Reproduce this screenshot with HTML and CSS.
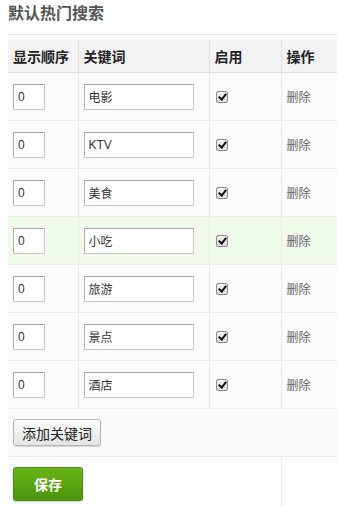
FILE: index.html
```html
<!DOCTYPE html>
<html lang="zh-CN">
<head>
    <meta charset="UTF-8">
    <title>默认热门搜索</title>
    <link rel="stylesheet" href="styles.css">
</head>
<body>
    <h2 class="title">默认热门搜索</h2>
    <table class="hot-table">
        <colgroup>
            <col class="c-order">
            <col class="c-word">
            <col class="c-on">
            <col class="c-op">
        </colgroup>
        <thead>
            <tr>
                <th>显示顺序</th>
                <th>关键词</th>
                <th>启用</th>
                <th>操作</th>
            </tr>
        </thead>
        <tbody>
            <tr>
                <td><input class="ipt ipt-order" type="text" value="0"></td>
                <td><input class="ipt ipt-word" type="text" value="电影"></td>
                <td><input class="chk" type="checkbox" checked></td>
                <td><a class="del" href="#">删除</a></td>
            </tr>
            <tr>
                <td><input class="ipt ipt-order" type="text" value="0"></td>
                <td><input class="ipt ipt-word" type="text" value="KTV"></td>
                <td><input class="chk" type="checkbox" checked></td>
                <td><a class="del" href="#">删除</a></td>
            </tr>
            <tr>
                <td><input class="ipt ipt-order" type="text" value="0"></td>
                <td><input class="ipt ipt-word" type="text" value="美食"></td>
                <td><input class="chk" type="checkbox" checked></td>
                <td><a class="del" href="#">删除</a></td>
            </tr>
            <tr class="hover">
                <td><input class="ipt ipt-order" type="text" value="0"></td>
                <td><input class="ipt ipt-word" type="text" value="小吃"></td>
                <td><input class="chk" type="checkbox" checked></td>
                <td><a class="del" href="#">删除</a></td>
            </tr>
            <tr>
                <td><input class="ipt ipt-order" type="text" value="0"></td>
                <td><input class="ipt ipt-word" type="text" value="旅游"></td>
                <td><input class="chk" type="checkbox" checked></td>
                <td><a class="del" href="#">删除</a></td>
            </tr>
            <tr>
                <td><input class="ipt ipt-order" type="text" value="0"></td>
                <td><input class="ipt ipt-word" type="text" value="景点"></td>
                <td><input class="chk" type="checkbox" checked></td>
                <td><a class="del" href="#">删除</a></td>
            </tr>
            <tr>
                <td><input class="ipt ipt-order" type="text" value="0"></td>
                <td><input class="ipt ipt-word" type="text" value="酒店"></td>
                <td><input class="chk" type="checkbox" checked></td>
                <td><a class="del" href="#">删除</a></td>
            </tr>
            <tr class="add-row">
                <td colspan="4"><button class="btn-add" type="button">添加关键词</button></td>
            </tr>
            <tr class="save-row">
                <td colspan="3"><button class="btn-save" type="button">保存</button></td>
                <td></td>
            </tr>
        </tbody>
    </table>
</body>
</html>
```

FILE: styles.css
```css
body {
    margin: 0 0 0 8px;
    background-color: #fff;
    font-family: "Liberation Sans", "Noto Sans CJK SC", sans-serif;
    font-size: 12px;
    color: #333;
    overflow: hidden;
}

.title {
    margin: 0;
    padding: 4px 0 10px;
    font-size: 16px;
    line-height: 20px;
    font-weight: bold;
    color: #555;
    border-bottom: 1px solid #ebebeb;
}

.hot-table {
    margin-top: 5px;
    width: 340px;
    border-collapse: collapse;
    table-layout: fixed;
}

.c-order { width: 70px; }
.c-word { width: 131px; }
.c-on { width: 72px; }
.c-op { width: 67px; }

.hot-table th {
    height: 32px;
    padding: 0 0 0 5px;
    text-align: left;
    font-size: 14px;
    font-weight: bold;
    color: #222;
    background-color: #f3f3f3;
    border-right: 1px solid #e2e2e2;
    border-bottom: 1px solid #dcdcdc;
}

.hot-table td {
    height: 47px;
    padding: 0 0 0 5px;
    background-color: #fcfcfc;
    border-right: 1px solid #ececec;
    border-bottom: 1px solid #ececec;
    vertical-align: middle;
}

.hot-table tr.hover td {
    background-color: #f1fbeb;
}

.ipt {
    box-sizing: border-box;
    height: 26px;
    padding: 0 4px;
    border: 1px solid #c8c8c8;
    border-top-color: #a8a8a8;
    border-left-color: #b4b4b4;
    background-color: #fff;
    font-family: "Liberation Sans", "Noto Sans CJK SC", sans-serif;
    font-size: 12px;
    color: #333;
}

.ipt-order { width: 32px; }
.ipt-word { width: 110px; }

.chk {
    -webkit-appearance: none;
    appearance: none;
    position: relative;
    box-sizing: border-box;
    margin: 0 0 0 1px;
    width: 12px;
    height: 12px;
    border: 1px solid #8f8f8f;
    border-radius: 2px;
    background: linear-gradient(#f4f4f4, #d8d8d8);
    vertical-align: middle;
}

/* check mark */
.chk:checked::after {
    content: "";
    position: absolute;
    left: 3px;
    top: 0px;
    width: 3px;
    height: 6px;
    border: solid #111;
    border-width: 0 2px 2px 0;
    transform: rotate(40deg);
}

.del {
    font-size: 12px;
    color: #666;
    text-decoration: none;
}

.add-row td {
    background-color: #fafafa;
}

.btn-add {
    height: 27px;
    padding: 0 8px;
    border: 1px solid #b5b5b5;
    border-radius: 3px;
    background: linear-gradient(#fdfdfd, #e4e4e4);
    box-shadow: 0 1px 1px rgba(0, 0, 0, 0.15);
    font-family: "Liberation Sans", "Noto Sans CJK SC", sans-serif;
    font-size: 14px;
    color: #222;
}

.save-row td {
    height: 50px;
    background-color: #fff;
    border-bottom: none;
}

.btn-save {
    margin-top: 3px;
    width: 70px;
    height: 34px;
    border: 1px solid #4a8a0d;
    border-radius: 3px;
    background: linear-gradient(#6ab417, #4c940b);
    box-shadow: 0 1px 2px rgba(0, 0, 0, 0.2);
    font-family: "Liberation Sans", "Noto Sans CJK SC", sans-serif;
    font-size: 14px;
    font-weight: bold;
    color: #fff;
}
```
